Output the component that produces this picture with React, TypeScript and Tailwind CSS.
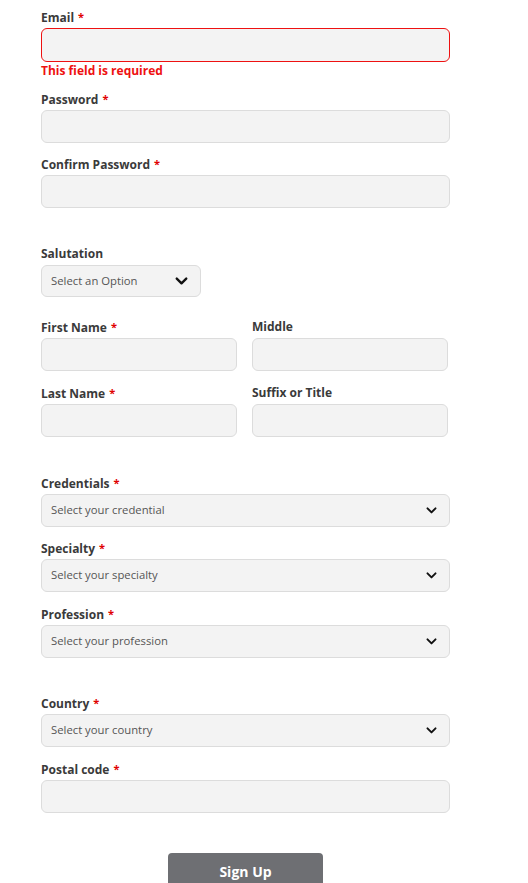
import React from "react";

const font = { fontFamily: '"Open Sans", "Liberation Sans", sans-serif' };

function Chevron({ size = 10 }: { size?: number }) {
  return (
    <svg width={size} height={size * 0.65} viewBox="0 0 12 8" fill="none">
      <polyline points="1.5,1.5 6,6 10.5,1.5" stroke="#111" strokeWidth="2.2" strokeLinecap="round" strokeLinejoin="round" />
    </svg>
  );
}

function Label({ text, required }: { text: string; required?: boolean }) {
  return (
    <div className="h-[16px] leading-[16px] text-[12px] font-bold text-[#3a3a3a]">
      {text}
      {required && <span className="ml-[4px] align-[1px] text-[11px] text-[#e00000]">*</span>}
    </div>
  );
}

function TextInput() {
  return <div className="mt-[3px] h-[33px] w-full rounded-[6px] border border-[#dcdcdc] bg-[#f3f3f3]" />;
}

function SelectBox({ placeholder }: { placeholder: string }) {
  return (
    <div className="mt-[3px] flex h-[33px] w-full items-center justify-between rounded-[6px] border border-[#dcdcdc] bg-[#f3f3f3] pl-[9px] pr-[12px]">
      <span className="text-[11.3px] text-[#555]">{placeholder}</span>
      <Chevron size={11} />
    </div>
  );
}

function Field({
  label,
  required,
  children,
  className = "",
}: {
  label: string;
  required?: boolean;
  children: React.ReactNode;
  className?: string;
}) {
  return (
    <div className={className}>
      <Label text={label} required={required} />
      {children}
    </div>
  );
}

export default function App() {
  return (
    <div className="min-h-[883px] bg-white" style={font}>
      <div className="ml-[41px] w-[409px] pt-[9px] pb-[20px]">
        <Field label="Email" required>
          <div className="mt-[3px] h-[34px] w-full rounded-[6px] border border-[#ee1111] bg-[#f3f3f3]" />
          <div className="mt-[1px] h-[16px] leading-[16px] text-[12px] font-bold text-[#ee1111]">
            This field is required
          </div>
        </Field>

        <Field label="Password" required className="mt-[12px]">
          <TextInput />
        </Field>

        <Field label="Confirm Password" required className="mt-[13px]">
          <TextInput />
        </Field>

        <Field label="Salutation" className="mt-[38px]">
          <div className="w-[160px]">
            <div className="mt-[3px] flex h-[32px] w-full items-center justify-between rounded-[6px] border border-[#dcdcdc] bg-[#f3f3f3] pl-[9px] pr-[12px]">
              <span className="text-[11.3px] text-[#555]">Select an Option</span>
              <Chevron size={13} />
            </div>
          </div>
        </Field>

        <div className="mt-[22px] grid grid-cols-[196px_196px] gap-x-[15px] gap-y-[14px]">
          <Field label="First Name" required>
            <TextInput />
          </Field>
          <Field label="Middle">
            <TextInput />
          </Field>
          <Field label="Last Name" required>
            <TextInput />
          </Field>
          <Field label="Suffix or Title">
            <TextInput />
          </Field>
        </div>

        <Field label="Credentials" required className="mt-[38px]">
          <SelectBox placeholder="Select your credential" />
        </Field>
        <Field label="Specialty" required className="mt-[13px]">
          <SelectBox placeholder="Select your specialty" />
        </Field>
        <Field label="Profession" required className="mt-[14px]">
          <SelectBox placeholder="Select your profession" />
        </Field>

        <Field label="Country" required className="mt-[37px]">
          <SelectBox placeholder="Select your country" />
        </Field>
        <Field label="Postal code" required className="mt-[14px]">
          <TextInput />
        </Field>

        <div className="mt-[40px] flex justify-center">
          <button className="h-[36px] w-[155px] rounded-[4px] bg-[#6e6f73] text-[14px] font-bold text-white">
            Sign Up
          </button>
        </div>
      </div>
    </div>
  );
}
